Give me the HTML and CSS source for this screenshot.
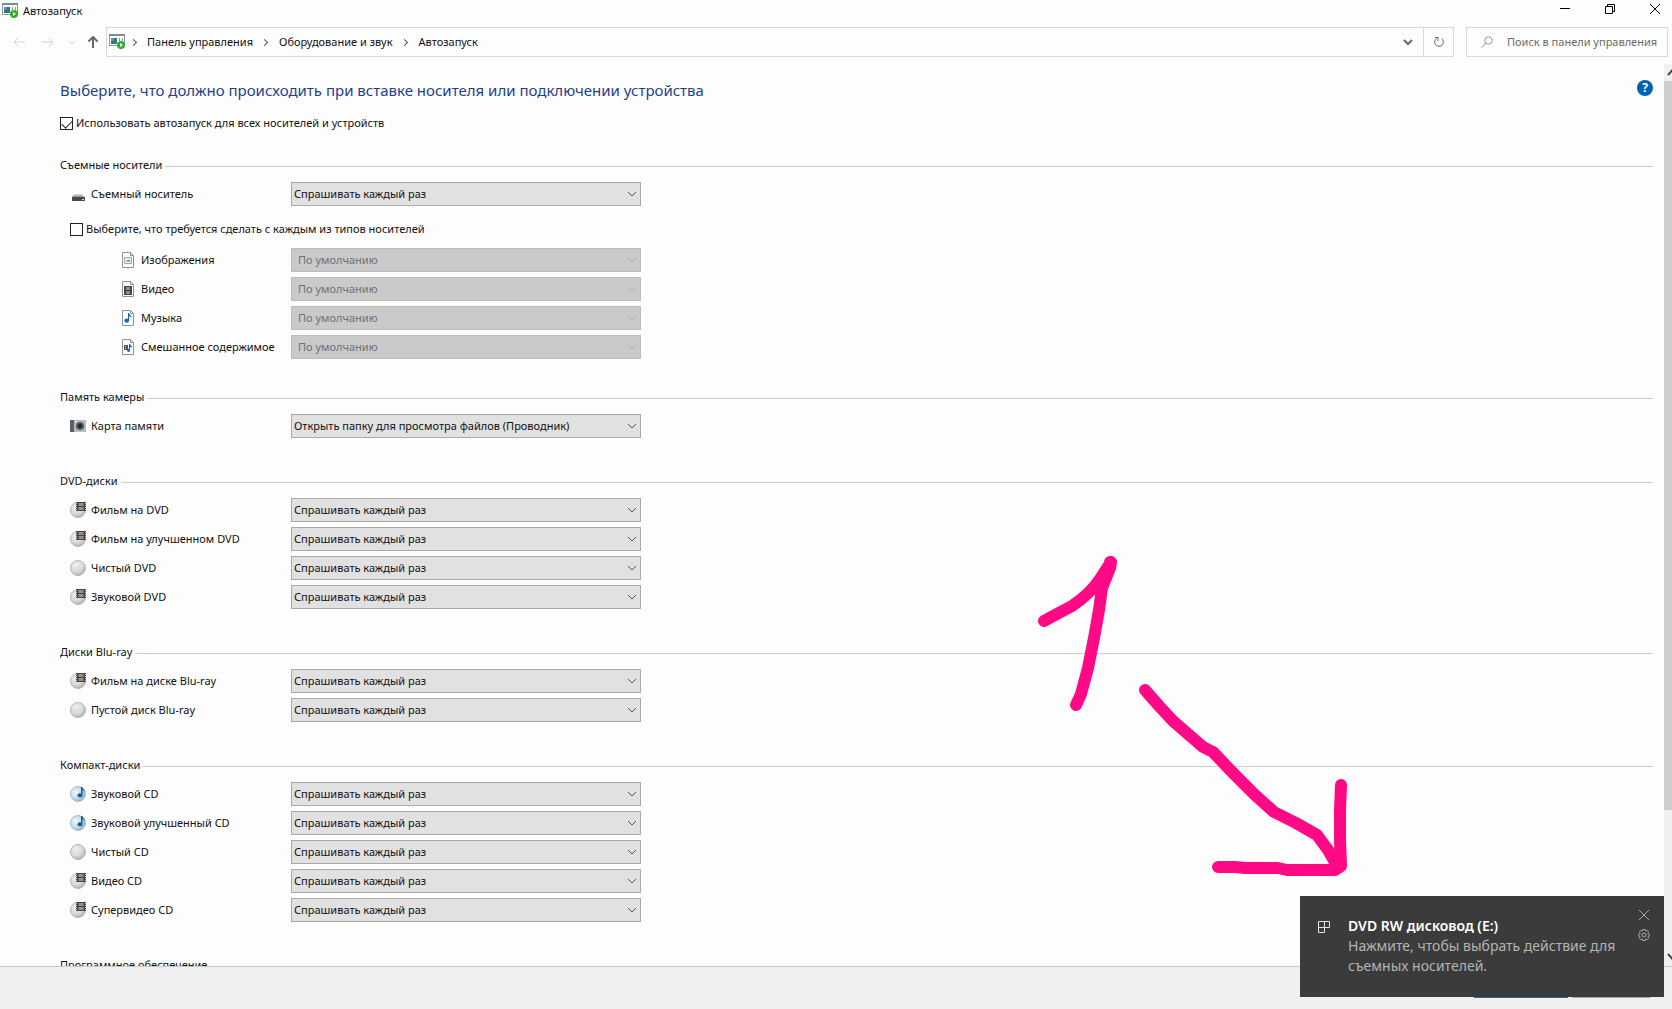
FILE: index.html
```html
<!DOCTYPE html>
<html lang="ru">
<head>
<meta charset="utf-8">
<meta name="viewport" content="width=device-width, initial-scale=1">
<title>Автозапуск</title>
<link rel="stylesheet" href="styles.css">
</head>
<body>
<svg class="sprite" aria-hidden="true">
  <defs>
    <radialGradient id="disc-fill" cx="0.4" cy="0.35" r="0.7">
      <stop offset="0" stop-color="#f2f4f4"/><stop offset="0.6" stop-color="#d6d9d9"/><stop offset="1" stop-color="#a8abab"/>
    </radialGradient>
    <radialGradient id="disc-blue" cx="0.35" cy="0.4" r="0.75">
      <stop offset="0" stop-color="#f4f9fc"/><stop offset="0.5" stop-color="#c3dbe9"/><stop offset="1" stop-color="#7fa5bd"/>
    </radialGradient>
    <linearGradient id="drive-fill" x1="0" y1="0" x2="0" y2="1">
      <stop offset="0" stop-color="#e4e4e4"/><stop offset="1" stop-color="#8a8a8a"/>
    </linearGradient>
    <symbol id="i-app" viewBox="0 0 16 16">
      <rect x="0.5" y="0.5" width="15" height="11" fill="#fff" stroke="#8b9a9c"/>
      <path d="M0 0h16v2H0z" fill="#7b8c92"/>
      <path d="M2 4h6v6H2z" fill="#34747f"/><path d="M2 4h3v3H2z" fill="#5b8fb5"/>
      <path d="M10 4h1v3h-1zM13 4h1v3h-1z" fill="#7ba08c"/>
      <circle cx="12" cy="11" r="4" fill="#2fae2b"/>
      <path d="M11 9v4l3-2z" fill="#fff"/>
    </symbol>
    <symbol id="i-disc" viewBox="0 0 16 16">
      <circle cx="8" cy="8" r="7.5" fill="url(#disc-fill)" stroke="#b4b7b7"/>
      <circle cx="8" cy="8" r="2" fill="#e9ebeb" stroke="#d4d7d7"/>
    </symbol>
    <symbol id="i-film" viewBox="0 0 16 16">
      <circle cx="8" cy="8" r="7.5" fill="url(#disc-fill)" stroke="#b4b7b7"/>
      <path d="M6 0h10v9H6z" fill="#4a4541"/>
      <path d="M8.500 1h5v3h-5zM8.500 5h5v3h-5z" fill="#958d87"/>
      <path d="M6 1h1v1H6zM6 3h1v1H6zM6 5h1v1H6zM6 7h1v1H6zM15 1h1v1h-1zM15 3h1v1h-1zM15 5h1v1h-1zM15 7h1v1h-1z" fill="#c9c5c1"/>
    </symbol>
    <symbol id="i-audio" viewBox="0 0 16 16">
      <circle cx="8" cy="8" r="7.5" fill="url(#disc-blue)" stroke="#a9bcc8"/>
      <path d="M11 1h1.500c0 2 2.500 2 2 5-.5-1.500-1-1.500-2-2v5.500a2.500 2 0 1 1-1.500-2z" fill="#14619c"/>
    </symbol>
    <symbol id="i-drive" viewBox="0 0 16 16">
      <path d="M4 8h8l2 3H2z" fill="url(#drive-fill)"/>
      <path d="M2 11h13v4H2z" fill="#4a4a4a"/><path d="M12 13h2v1h-2z" fill="#ddd"/>
    </symbol>
    <symbol id="i-card" viewBox="0 0 16 16">
      <path d="M0 2h4v12H0z" fill="#5c6064"/><path d="M4 2h12v12H4z" fill="#b6babb"/>
      <circle cx="10" cy="8" r="4" fill="#53585a"/><circle cx="10" cy="8" r="2" fill="#1e2327"/>
      <path d="M5 3h2v1H5z" fill="#eee"/>
    </symbol>
    <symbol id="i-page" viewBox="0 0 12 16">
      <path d="M.5.5h8l3 3v12H.5z" fill="#fcfcfc" stroke="#8d959b"/><path d="M8.500.5v3h3" fill="none" stroke="#8d959b"/>
    </symbol>
  </defs>
</svg>

<div class="window">
  <header class="titlebar">
    <svg class="icon"><use href="#i-app"/></svg>
    <span class="title">Автозапуск</span>
    <div class="controls">
      <button type="button" aria-label="Свернуть"><svg viewBox="0 0 10 10"><path d="M0 4.500h10"/></svg></button>
      <button type="button" aria-label="Восстановить"><svg viewBox="0 0 10 10"><path d="M.5 2.500h7v7h-7zM2.500 2.500v-2h7v7h-2"/></svg></button>
      <button type="button" aria-label="Закрыть"><svg viewBox="0 0 10 10"><path d="M0 0l10 10M10 0L0 10"/></svg></button>
    </div>
  </header>

  <nav class="navbar">
    <div class="history">
      <button type="button" class="faint" aria-label="Назад"><svg viewBox="0 0 12 12"><path d="M12 6H1M5.500 1.500L1 6l4.500 4.500"/></svg></button>
      <button type="button" class="faint" aria-label="Вперед"><svg viewBox="0 0 12 12"><path d="M0 6h11M6.500 1.500L11 6l-4.500 4.500"/></svg></button>
      <button type="button" class="faint recent" aria-label="Последние расположения"><svg viewBox="0 0 12 12"><path d="M3 5l3 3 3-3"/></svg></button>
      <button type="button" class="up" aria-label="Вверх"><svg viewBox="0 0 12 12"><path d="M6 12V1M1.500 5.500L6 1l4.500 4.500"/></svg></button>
    </div>
    <div class="address">
      <svg class="icon"><use href="#i-app"/></svg>
      <ol class="crumbs">
        <li><a href="#">Панель управления</a></li>
        <li><a href="#">Оборудование и звук</a></li>
        <li><a href="#">Автозапуск</a></li>
      </ol>
      <button type="button" class="drop" aria-label="Предыдущие расположения"><svg viewBox="0 0 12 12"><path d="M2 4l4 4 4-4"/></svg></button>
      <button type="button" class="refresh" aria-label="Обновить"><svg viewBox="0 0 12 12"><path d="M8.500 2.500A4.300 4.300 0 1 1 3.500 2.500M2 1.500h3v3.500"/></svg></button>
    </div>
    <div class="search">
      <svg viewBox="0 0 12 12" aria-hidden="true"><circle cx="7.500" cy="4.500" r="3.700"/><path d="M4.800 7.200L.5 11.500"/></svg>
      <input type="text" placeholder="Поиск в панели управления" aria-label="Поиск в панели управления">
    </div>
  </nav>

  <div class="body">
    <main class="content">
      <div class="head">
        <h1>Выберите, что должно происходить при вставке носителя или подключении устройства</h1>
        <button type="button" class="help" aria-label="Справка">?</button>
      </div>
      <label class="check"><input type="checkbox" checked>Использовать автозапуск для всех носителей и устройств</label>

      <section class="group">
        <h2>Съемные носители</h2>
        <div class="row"><label for="s1"><svg class="icon"><use href="#i-drive"/></svg>Съемный носитель</label><select id="s1"><option>Спрашивать каждый раз</option></select></div>
        <label class="check inner"><input type="checkbox">Выберите, что требуется сделать с каждым из типов носителей</label>
        <div class="row sub"><label for="s2"><svg class="page" viewBox="0 0 12 16"><use href="#i-page"/><path d="M2.500 5.500h7v6h-7z" fill="#eee" stroke="#a2a8ac"/><path d="M4 9.500l2-2 1 1 1-1v2z" fill="#6e8a86"/></svg>Изображения</label><select id="s2" disabled><option>По умолчанию</option></select></div>
        <div class="row sub"><label for="s3"><svg class="page" viewBox="0 0 12 16"><use href="#i-page"/><path d="M2 5h8v9H2z" fill="#444"/><path d="M4 6h4v3H4zM4 10h4v3H4z" fill="#8c8c8c"/></svg>Видео</label><select id="s3" disabled><option>По умолчанию</option></select></div>
        <div class="row sub"><label for="s4"><svg class="page" viewBox="0 0 12 16"><use href="#i-page"/><path d="M6 3h1c0 2 3 2 2.500 5-.5-1.500-1.500-1.500-2.500-2v5a2.300 2 0 1 1-1-2z" fill="#1764b4"/></svg>Музыка</label><select id="s4" disabled><option>По умолчанию</option></select></div>
        <div class="row sub"><label for="s5"><svg class="page" viewBox="0 0 12 16"><use href="#i-page"/><path d="M2 6h4v5H2z" fill="#4b5358"/><path d="M3 7h1v1H3zM3 9h1v1H3z" fill="#ddd"/><path d="M7 5h1c0 1 2.500 2 2 4-.5-1-1-1-2-1v3a1.500 1.500 0 1 1-1-1z" fill="#1764b4"/></svg>Смешанное содержимое</label><select id="s5" disabled><option>По умолчанию</option></select></div>
      </section>

      <section class="group">
        <h2>Память камеры</h2>
        <div class="row"><label for="s6"><svg class="icon"><use href="#i-card"/></svg>Карта памяти</label><select id="s6"><option>Открыть папку для просмотра файлов (Проводник)</option></select></div>
      </section>

      <section class="group">
        <h2>DVD-диски</h2>
        <div class="row"><label for="s7"><svg class="icon"><use href="#i-film"/></svg>Фильм на DVD</label><select id="s7"><option>Спрашивать каждый раз</option></select></div>
        <div class="row"><label for="s8"><svg class="icon"><use href="#i-film"/></svg>Фильм на улучшенном DVD</label><select id="s8"><option>Спрашивать каждый раз</option></select></div>
        <div class="row"><label for="s9"><svg class="icon"><use href="#i-disc"/></svg>Чистый DVD</label><select id="s9"><option>Спрашивать каждый раз</option></select></div>
        <div class="row"><label for="s10"><svg class="icon"><use href="#i-film"/></svg>Звуковой DVD</label><select id="s10"><option>Спрашивать каждый раз</option></select></div>
      </section>

      <section class="group">
        <h2>Диски Blu-ray</h2>
        <div class="row"><label for="s11"><svg class="icon"><use href="#i-film"/></svg>Фильм на диске Blu-ray</label><select id="s11"><option>Спрашивать каждый раз</option></select></div>
        <div class="row"><label for="s12"><svg class="icon"><use href="#i-disc"/></svg>Пустой диск Blu-ray</label><select id="s12"><option>Спрашивать каждый раз</option></select></div>
      </section>

      <section class="group">
        <h2>Компакт-диски</h2>
        <div class="row"><label for="s13"><svg class="icon"><use href="#i-audio"/></svg>Звуковой CD</label><select id="s13"><option>Спрашивать каждый раз</option></select></div>
        <div class="row"><label for="s14"><svg class="icon"><use href="#i-audio"/></svg>Звуковой улучшенный CD</label><select id="s14"><option>Спрашивать каждый раз</option></select></div>
        <div class="row"><label for="s15"><svg class="icon"><use href="#i-disc"/></svg>Чистый CD</label><select id="s15"><option>Спрашивать каждый раз</option></select></div>
        <div class="row"><label for="s16"><svg class="icon"><use href="#i-film"/></svg>Видео CD</label><select id="s16"><option>Спрашивать каждый раз</option></select></div>
        <div class="row"><label for="s17"><svg class="icon"><use href="#i-film"/></svg>Супервидео CD</label><select id="s17"><option>Спрашивать каждый раз</option></select></div>
      </section>

      <section class="group">
        <h2>Программное обеспечение</h2>
      </section>
    </main>
    <div class="scrollbar" aria-hidden="true">
      <div class="arrow"><svg viewBox="0 0 16 16"><path d="M4 11l4.500-5L13 11"/></svg></div>
      <div class="track"><div class="thumb"></div></div>
      <div class="arrow"><svg viewBox="0 0 16 16"><path d="M4 5l4.500 5L13 5"/></svg></div>
    </div>
  </div>

  <footer class="footer">
    <button type="button" class="save" aria-label="Сохранить"></button>
    <button type="button" class="cancel" aria-label="Отмена"></button>
  </footer>

  <svg class="marker" viewBox="0 0 340 350" aria-hidden="true">
    <path d="M24 81L35 75 52 66Q70 54 80 39L91 22 90 28 82 48 79 70 74 98 68 128 61 154 56 165M90 22v6"/>
    <path d="M125 150L140 167 153 181 168 194 183 207 193 212 214 234 234 254 254 272 276 283 297 295 308 310 316 324M321 245L320 270 320 300 321 326 315 330H267L258 328 225 328 215 327H198"/>
  </svg>

  <aside class="toast">
    <svg class="toast-icon" viewBox="0 0 12 12" aria-hidden="true"><path d="M.5.5h11v6h-5v5h-6zM.5 6.500h6M6.500.5v6"/></svg>
    <div class="toast-text">
      <strong>DVD RW дисковод (E:)</strong>
      <p>Нажмите, чтобы выбрать действие для съемных носителей.</p>
    </div>
    <div class="toast-actions">
      <button type="button" aria-label="Закрыть уведомление"><svg viewBox="0 0 12 12"><path d="M1 1l10 10M11 1L1 11"/></svg></button>
      <button type="button" aria-label="Параметры уведомлений"><svg viewBox="0 0 12 12"><path d="M4.800.5h2.400l.4 1.500 1.500-.6 1.500 1.700-.8 1.400 1.500.7v1.800l-1.500.7.8 1.400-1.500 1.600-1.500-.6-.4 1.400H4.800l-.4-1.400-1.500.6-1.500-1.600.8-1.400-1.500-.7V5.200l1.500-.7-.8-1.400 1.500-1.700 1.500.6z"/><circle cx="6" cy="6" r="2"/></svg></button>
    </div>
  </aside>
</div>
</body>
</html>
```
FILE: styles.css
```css
* { box-sizing: border-box; }

body {
  margin: 0;
  background: #fdfdfd;
  color: #111;
  font: 11px/16px "Noto Sans", "Open Sans", sans-serif;
}

button, input, select { font: inherit; color: inherit; }
button { padding: 0; border: 0; background: none; }
svg { display: block; flex: none; fill: none; stroke-width: 1; }
h1, h2, p, ol { margin: 0; padding: 0; font-weight: 400; }

.sprite { position: absolute; width: 0; height: 0; }
.icon { width: 16px; height: 16px; }
.page { width: 12px; height: 16px; }

.window {
  position: relative;
  display: flex;
  flex-direction: column;
  height: 100vh;
  overflow: hidden;
}

/* Title bar */
.titlebar { display: flex; align-items: center; height: 22px; padding: 0 12px 0 2px; gap: 5px; }
.controls { display: flex; gap: 35px; margin-left: auto; align-items: center; height: 22px; padding-bottom: 4px; }
.controls button { display: flex; }
.controls svg { width: 10px; height: 10px; stroke: #000; }

/* Navigation */
.navbar { display: flex; height: 42px; padding: 5px 4px 7px 13px; gap: 12px; align-items: stretch; }
.history { display: flex; align-items: center; gap: 17px; width: 93px; margin-right: -12px; }
.history svg { width: 12px; height: 12px; stroke: #666; stroke-width: 2; }
.history .faint svg { stroke: #d4d4d4; stroke-width: 1; }
.history .recent { margin: 0 -8px 0 -5px; }
.address { flex: 1; display: flex; align-items: center; border: 1px solid #d9d9d9; padding-left: 2px; }
.crumbs { display: flex; flex: 1; list-style: none; }
.crumbs li { display: flex; align-items: center; }
.crumbs li::before {
  content: "";
  width: 4px;
  height: 4px;
  margin: 0 11px 0 6px;
  border: solid #555;
  border-width: 1px 1px 0 0;
  transform: rotate(45deg);
}
.crumbs a { color: inherit; text-decoration: none; }
.crumbs li + li::before { margin: 0 12px 0 9px; }
.drop, .refresh { display: flex; align-items: center; justify-content: center; width: 30px; height: 100%; }
.refresh { border-left: 1px solid #d9d9d9; }
.drop svg, .refresh svg { width: 12px; height: 12px; stroke: #666; }
.drop svg { stroke-width: 2; }
.search { display: flex; align-items: center; width: 202px; border: 1px solid #d9d9d9; padding: 0 0 0 14px; gap: 14px; }
.search svg { width: 12px; height: 12px; stroke: #999; }
.search input { flex: 1; min-width: 0; padding: 0; border: 0; background: none; outline: 0; }
.search input::placeholder { color: #6b6b6b; opacity: 1; }

/* Settings list */
.body { flex: 1; min-height: 0; display: flex; }
.content { flex: 1; min-width: 0; overflow: hidden; padding: 12px 11px 0 60px; }
.head { display: flex; justify-content: space-between; align-items: flex-start; height: 38px; }
.head h1 { color: #1f3f8c; font-size: 15px; line-height: 28px; white-space: nowrap; }
.help {
  width: 16px;
  height: 16px;
  margin-top: 4px;
  border-radius: 50%;
  background: #0063b1;
  color: #fff;
  font-size: 12px;
  font-weight: 700;
  line-height: 16px;
}
.check { display: flex; align-items: center; gap: 3px; height: 18px; }
.check input {
  appearance: none;
  width: 13px;
  height: 13px;
  margin: 0;
  border: 1px solid #222;
  background: #fff;
}
.check input:checked::before {
  content: "";
  display: block;
  width: 9px;
  height: 5px;
  margin: 2px 0 0 1px;
  border: solid #222;
  border-width: 0 0 1px 1px;
  transform: rotate(-45deg);
}
.check + .group { margin-top: 24px; }
.inner { margin: 14px 0 10px 10px; }

.group { margin-bottom: 34px; }
.group:has(.sub) { margin-bottom: 29px; }
.group h2 { display: flex; align-items: flex-start; gap: 3px; height: 20px; margin-bottom: 6px; font-size: 11px; line-height: 18px; white-space: nowrap; }
.group h2::after { content: ""; flex: 1; height: 1px; margin-top: 10px; background: #cfcfcf; }
.row { display: grid; grid-template-columns: 231px minmax(0, 350px); height: 24px; }
.row + .row { margin-top: 5px; }
.row label { display: flex; align-items: center; gap: 5px; height: 23px; padding-left: 10px; white-space: nowrap; }
.row.sub label { padding-left: 62px; gap: 7px; }
.row select {
  appearance: none;
  height: 24px;
  padding: 0 20px 0 2px;
  border: 1px solid #a9a9a9;
  border-radius: 0;
  background: #e1e1e1 url("data:image/svg+xml,%3Csvg xmlns='http://www.w3.org/2000/svg' width='10' height='6'%3E%3Cpath d='M1 1l4 4 4-4' fill='none' stroke='%23555'/%3E%3C/svg%3E") no-repeat right 3px center;
}
.row select:disabled {
  padding-left: 6px;
  border-color: #bcbcbc;
  background-color: #cacaca;
  background-image: url("data:image/svg+xml,%3Csvg xmlns='http://www.w3.org/2000/svg' width='10' height='6'%3E%3Cpath d='M1 1l4 4 4-4' fill='none' stroke='%23aaa'/%3E%3C/svg%3E");
  color: #707070;
  opacity: 1;
}

/* Scroll bar runs under the window edge */
.scrollbar { display: flex; flex-direction: column; width: 8px; overflow: hidden; background: #f0f0f0; }
.arrow { width: 17px; height: 17px; }
.arrow svg { width: 16px; height: 16px; stroke: #444; stroke-width: 2; }
.track { flex: 1; }
.thumb { height: 84%; background: #cdcdcd; }

.footer { display: flex; justify-content: flex-end; align-items: flex-end; gap: 4px; height: 43px; padding: 0 22px 11px 0; border-top: 1px solid #c8c8c8; background: #f0f0f0; }
.footer button { width: 78px; height: 23px; background: #a5a5a5; }
.footer .save { width: 94px; background: #2f6496; }

/* Hand-drawn marker */
.marker { position: absolute; right: 312px; bottom: 119px; width: 340px; height: 350px; stroke: #ff0a86; stroke-width: 12; stroke-linecap: round; stroke-linejoin: round; pointer-events: none; }

/* Notification */
.toast { position: absolute; right: 8px; bottom: 12px; display: flex; width: 364px; height: 101px; padding: 20px 14px 0 18px; background: #3b3b3b; color: #b4b4b4; font-size: 14px; line-height: 20px; }
.toast-icon { width: 12px; height: 12px; margin: 5px 18px 0 0; stroke: #e6e6e6; }
.toast-text { width: 276px; }
.toast-text strong { display: block; color: #fff; font-weight: 600; }
.toast-actions { display: flex; flex-direction: column; gap: 8px; margin: -7px 0 0 auto; }
.toast-actions svg { width: 12px; height: 12px; stroke: #a8a8a8; }
```
